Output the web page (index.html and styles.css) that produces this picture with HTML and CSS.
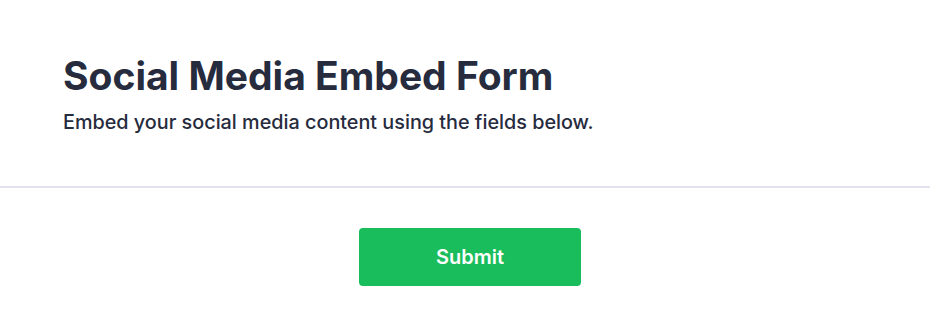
FILE: index.html
```html
<!DOCTYPE html>
<html>
<head>
  <link rel="stylesheet" href="styles.css">
</head>
<body>

<div class="header">
  <h1>Social Media Embed Form</h1>
  <p>Embed your social media content using the fields below.</p>
</div>

<form class="embed-form">
  <button type="button" class="submit">Submit</button>
</form>

</body>
</html>
```

FILE: styles.css
```css
body {
  margin: 0;
  font-family: Inter, "Noto Sans", sans-serif;
  background: #fff;
  color: #262b3d;
}
.header {
  padding: 52px 63px 50px;
  border-bottom: 2px solid #e2e2ec;
}
.header h1 {
  margin: 0;
  font-size: 39px;
  line-height: 48px;
  font-weight: 700;
  color: #262b3d;
}
.header p {
  margin: 8px 0 0;
  font-size: 19.8px;
  line-height: 28px;
  font-weight: 500;
  color: #262b3d;
}
.embed-form {
  display: flex;
  justify-content: center;
  padding: 40px 0 0 10px;
}
.submit {
  width: 222px;
  height: 58px;
  border: none;
  border-radius: 4px;
  background: #19bd5b;
  color: #fff;
  font-family: Inter, "Noto Sans", sans-serif;
  font-size: 20px;
  font-weight: 600;
}
```
